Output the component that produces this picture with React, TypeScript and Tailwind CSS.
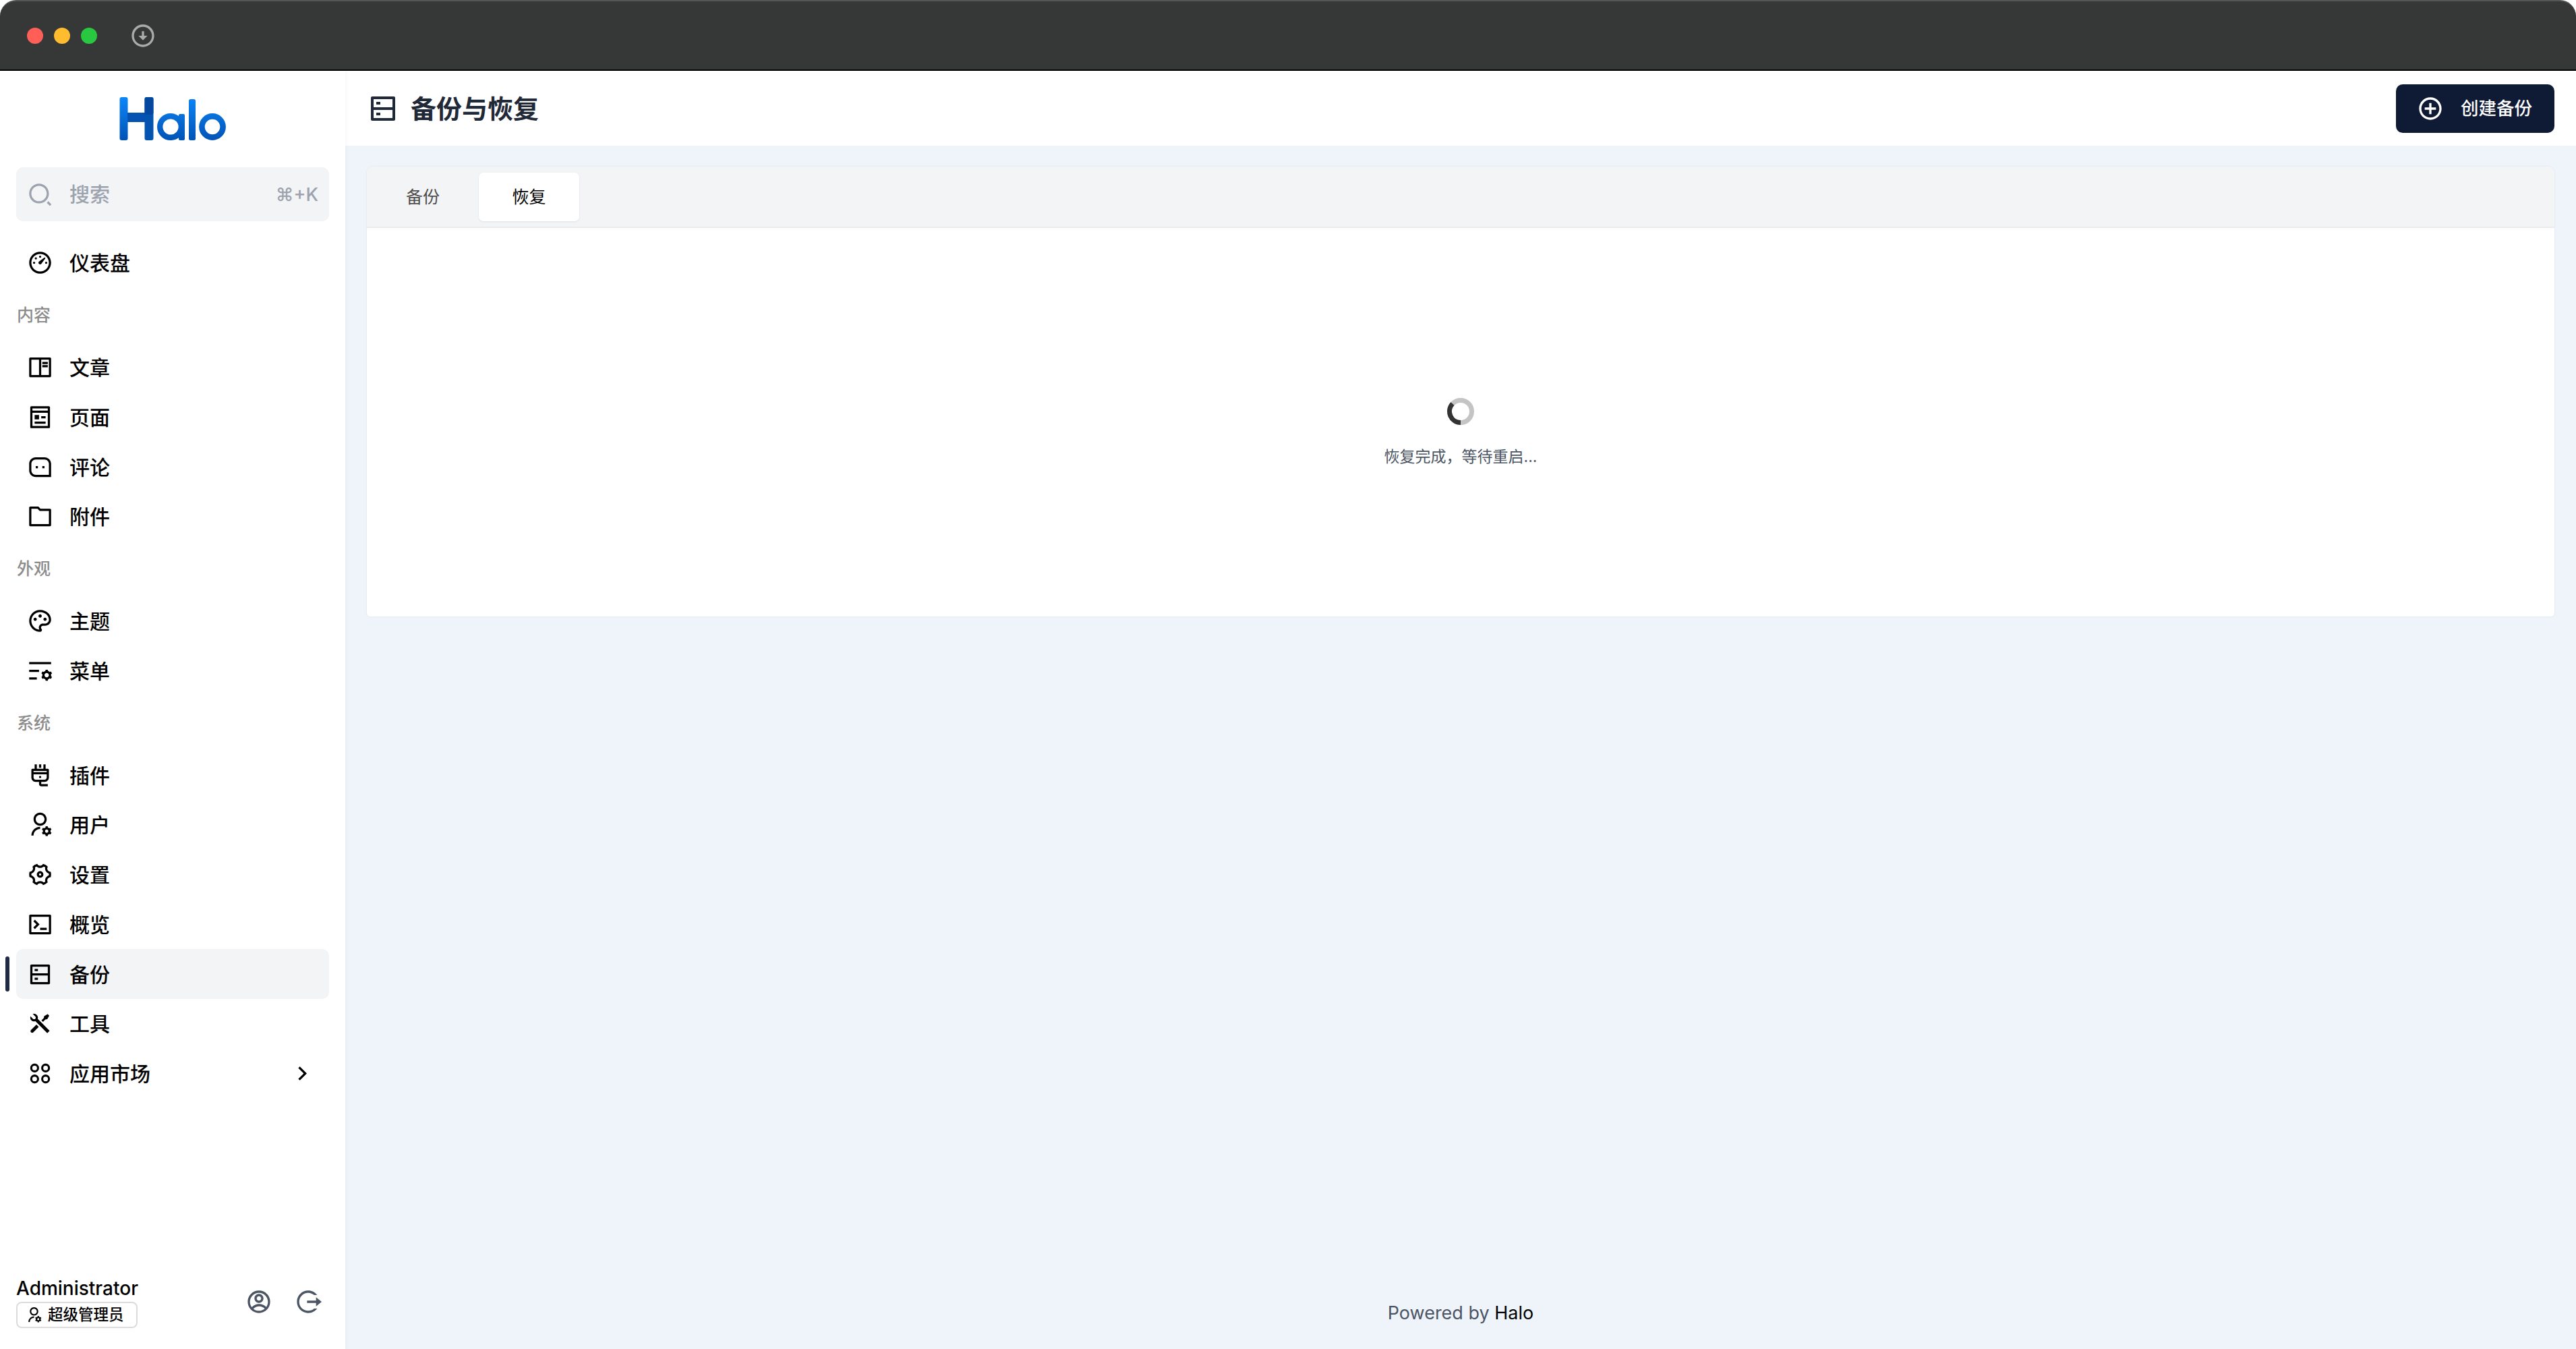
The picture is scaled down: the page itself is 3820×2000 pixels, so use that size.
import React from "react";
import {
  RiDashboard3Line, RiBookReadLine, RiPagesLine, RiMessage3Line, RiFolderLine, RiPaletteLine, RiListSettingsLine,
  RiPlug2Line, RiUserSettingsLine, RiSettings4Line, RiTerminalBoxLine, RiServerLine, RiToolsFill,
  RiArrowRightSLine, RiAccountCircleLine, RiLogoutCircleRLine, RiAddCircleLine, RiSearch2Line, RiArrowDownCircleLine,
} from "react-icons/ri";

function Logo() {
  return (
    <svg width="158" height="64" viewBox="0 0 158 64" fill="none">
      <defs>
        <linearGradient id="hg" x1="0" y1="0" x2="0" y2="64" gradientUnits="userSpaceOnUse">
          <stop offset="0" stopColor="#0e86f8" />
          <stop offset="1" stopColor="#0053b5" />
        </linearGradient>
      </defs>
      <rect x="0.5" y="0" width="12" height="64" rx="3" fill="url(#hg)" />
      <rect x="37.5" y="0" width="13" height="64" rx="3" fill="#0353b0" />
      <rect x="37.5" y="0" width="13" height="26" rx="3" fill="#04479f" />
      <rect x="12" y="23" width="26" height="14" fill="#0552b2" />
      <circle cx="76" cy="44" r="15.8" stroke="url(#hg)" strokeWidth="8.4" />
      <rect x="88" y="25" width="9" height="39" rx="2" fill="url(#hg)" />
      <rect x="103" y="3" width="10" height="61" rx="2.5" fill="url(#hg)" />
      <circle cx="138" cy="44" r="15.6" stroke="url(#hg)" strokeWidth="8.6" />
    </svg>
  );
}

function AppsIcon({ size, className }: { size?: number; className?: string }) {
  return (
    <svg width={size} height={size} viewBox="0 0 24 24" fill="none" stroke="currentColor" strokeWidth="1.9" className={className}>
      <circle cx="7" cy="7" r="3.1" />
      <circle cx="17" cy="7" r="3.1" />
      <circle cx="7" cy="17" r="3.1" />
      <circle cx="17" cy="17" r="3.1" />
    </svg>
  );
}

type Item = { label: string; icon: React.ComponentType<{ size?: number; className?: string }>; active?: boolean; arrow?: boolean };

function NavRow({ item }: { item: Item }) {
  const Icon = item.icon;
  return (
    <div className={`relative flex h-[73.75px] items-center gap-[24px] rounded-[10px] pl-[40px] ${item.active ? "bg-[#f3f4f6]" : ""}`}>
      {item.active && <div className="absolute left-[-16px] top-[11px] h-[52px] w-[6px] rounded-[3px] bg-[#1f2a44]" />}
      <Icon size={39} className="ml-[-24px] shrink-0 text-black" />
      <span className="pt-[1px] text-[30px] leading-none font-medium text-black">{item.label}</span>
      {item.arrow && <RiArrowRightSLine size={39} className="ml-auto mr-[20px] text-black" />}
    </div>
  );
}

function Group({ label, items }: { label?: string; items: Item[] }) {
  return (
    <div>
      {label && (
        <div className="flex h-[81px] items-center pt-[1px] pl-px text-[25px] leading-none font-medium text-[#8c8c8c]">{label}</div>
      )}
      {items.map((it) => (
        <NavRow key={it.label} item={it} />
      ))}
    </div>
  );
}

export default function App() {
  return (
    <div
      className="flex h-[2000px] w-[3820px] flex-col overflow-hidden bg-white"
      style={{ fontFamily: 'Inter, "Noto Sans CJK SC", sans-serif' }}
    >
      <div className="flex h-[105px] shrink-0 items-center rounded-t-[24px] border-t-[2px] border-b-[2px] border-t-[#555656] border-b-black bg-[#363737] pl-[40px]">
        <span className="h-[24px] w-[24px] rounded-full bg-[#ff5f57]" />
        <span className="ml-[16px] h-[24px] w-[24px] rounded-full bg-[#febc2e]" />
        <span className="ml-[16px] h-[24px] w-[24px] rounded-full bg-[#28c840]" />
        <RiArrowDownCircleLine size={40} className="ml-[48px] text-[#aaaaaa]" />
      </div>
      <div className="flex min-h-0 flex-1">
        <aside className="relative z-10 flex w-[512px] shrink-0 flex-col bg-white px-[24px] shadow-[3px_0_4px_rgba(0,0,0,0.025)]">
          <div className="flex h-[143px] shrink-0 justify-center pt-[39px]">
            <Logo />
          </div>
          <div className="flex h-[80px] shrink-0 items-center rounded-[10px] bg-[#f3f4f6] pl-[16px] pr-[16px]">
            <RiSearch2Line size={39} className="text-[#9ca3af]" />
            <span className="ml-[24px] text-[30px] leading-none font-medium text-[#9ca3af]">搜索</span>
            <span className="ml-auto text-[27px] leading-none font-medium text-[#9ca3af]">⌘+K</span>
          </div>
          <div className="mt-[25px] flex-1">
            <Group items={[{ label: "仪表盘", icon: RiDashboard3Line }]} />
            <Group
              label="内容"
              items={[
                { label: "文章", icon: RiBookReadLine },
                { label: "页面", icon: RiPagesLine },
                { label: "评论", icon: RiMessage3Line },
                { label: "附件", icon: RiFolderLine },
              ]}
            />
            <Group
              label="外观"
              items={[
                { label: "主题", icon: RiPaletteLine },
                { label: "菜单", icon: RiListSettingsLine },
              ]}
            />
            <Group
              label="系统"
              items={[
                { label: "插件", icon: RiPlug2Line },
                { label: "用户", icon: RiUserSettingsLine },
                { label: "设置", icon: RiSettings4Line },
                { label: "概览", icon: RiTerminalBoxLine },
                { label: "备份", icon: RiServerLine, active: true },
                { label: "工具", icon: RiToolsFill },
                { label: "应用市场", icon: AppsIcon, arrow: true },
              ]}
            />
          </div>
          <div className="flex h-[105px] shrink-0 items-center justify-between pb-[31px]">
            <div className="flex flex-col items-start">
              <span className="text-[28px] leading-[30px] font-medium text-black">Administrator</span>
              <span className="mt-[5px] flex h-[39px] w-[180px] items-center rounded-[8px] border-[2px] border-[#dcdcdc] pl-[12px] text-[22.5px] leading-none font-medium text-black">
                <RiUserSettingsLine size={25} className="mr-[8px] shrink-0" />
                超级管理员
              </span>
            </div>
            <div className="mb-[4px] flex items-center gap-[33px] pr-[11px] text-[#4b5563]">
              <RiAccountCircleLine size={40} />
              <RiLogoutCircleRLine size={40} />
            </div>
          </div>
        </aside>
        <main className="flex min-w-0 flex-1 flex-col bg-[#eff4fb]">
          <header className="flex h-[111px] shrink-0 items-center justify-between bg-white pl-[32px] pr-[32px]">
            <div className="flex items-center gap-[17px]">
              <RiServerLine size={48} className="text-[#1f2937]" />
              <h1 className="text-[38px] leading-none font-bold text-[#1f2937]">备份与恢复</h1>
            </div>
            <button className="flex h-[72px] w-[235px] items-center gap-[25px] rounded-[10px] bg-[#0f1a35] pl-[31px] text-[26.5px] leading-none font-medium text-white">
              <RiAddCircleLine size={40} />
              创建备份
            </button>
          </header>
          <div className="px-[32px] pt-[31px]">
            <section className="overflow-hidden rounded-t-[10px] rounded-b-[5px] bg-white shadow-[0_0_3px_rgba(0,0,0,0.08)]">
              <div className="flex h-[91px] items-center gap-[8.5px] border-b-[2px] border-[#e9ebee] bg-[#f3f4f6] pl-[8.5px]">
                <div className="flex h-[72px] w-[149px] items-center justify-center pt-[2px] text-[25px] leading-none text-[#4d4d4d]">备份</div>
                <div className="flex h-[72px] w-[149px] items-center justify-center rounded-[7px] bg-white pt-[2px] text-[25px] leading-none text-black shadow-[0_1px_3px_rgba(0,0,0,0.08)]">恢复</div>
              </div>
              <div className="flex h-[576px] flex-col items-center pt-[252px]">
                <svg width="40" height="40" viewBox="0 0 40 40" fill="none">
                  <circle cx="20" cy="20" r="16.5" stroke="#c4c4c4" strokeWidth="7" />
                  <path d="M 20 36.5 A 16.5 16.5 0 0 1 8 8.7" stroke="#333333" strokeWidth="7" />
                </svg>
                <p className="mt-[32px] text-[23px] leading-[30px] text-[#4b5563]">{"恢复完成\uFF0C等待重启..."}</p>
              </div>
            </section>
          </div>
          <footer className="mt-auto flex h-[104px] shrink-0 items-center justify-center pb-[3px] text-[27px] leading-none text-[#4b5563]">
            Powered by&nbsp;<span className="text-black">Halo</span>
          </footer>
        </main>
      </div>
    </div>
  );
}
